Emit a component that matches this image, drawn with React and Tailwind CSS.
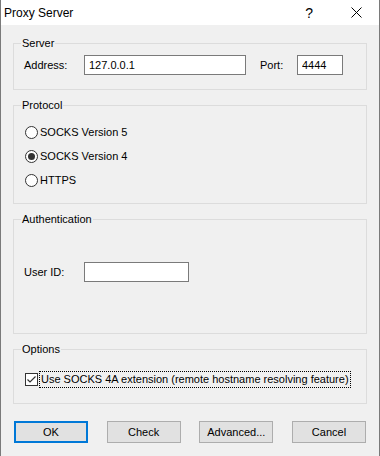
import React, { useState } from 'react';

const font = { fontFamily: '"Liberation Sans", Arial, sans-serif' };

const GroupBox = ({ title, className, children }) => (
  <fieldset className={`mx-[12px] border border-[#dcdcdc] ${className}`}>
    <legend className="ml-[7px] px-[1px] text-[11px] leading-[16px] text-black">{title}</legend>
    {children}
  </fieldset>
);

const Radio = ({ label, checked, onClick }) => (
  <div className="flex h-[24px] items-center pl-[11px] cursor-default" onClick={onClick}>
    <span className="flex h-[13px] w-[13px] items-center justify-center rounded-full border border-[#333333] bg-white">
      {checked && <span className="h-[7px] w-[7px] rounded-full bg-[#333333]" />}
    </span>
    <span className="ml-[2px] text-[11px] leading-[16px]">{label}</span>
  </div>
);

const Button = ({ children, primary }) => (
  <button
    type="button"
    className={`h-[22px] w-[74px] bg-[#e1e1e1] text-[11px] leading-[16px] text-black ${
      primary ? 'border-2 border-[#0078d7]' : 'border border-[#adadad]'
    }`}
  >
    {children}
  </button>
);

export default function App() {
  const [proto, setProto] = useState(4);
  const [use4a, setUse4a] = useState(true);

  return (
    <div style={font} className="flex h-[456px] w-[380px] flex-col border-x border-[#7a7a7a] bg-[#f0f0f0] text-black">
      {/* Title bar */}
      <div className="flex h-[25px] items-center bg-white">
        <span className="ml-[3px] text-[12px] leading-[16px]">Proxy Server</span>
        <span className="ml-auto mr-[38px] text-[14px] leading-[16px]">?</span>
        <svg width="11" height="11" viewBox="0 0 11 11" className="mr-[17px]">
          <path d="M0.5 0.5 L10.5 10.5 M10.5 0.5 L0.5 10.5" stroke="#000" strokeWidth="1" fill="none" />
        </svg>
      </div>

      <div className="pt-[10px]">
        <GroupBox title="Server" className="pt-[4px] pb-[14px]">
          <div className="flex h-[20px] items-center">
            <span className="w-[70px] pl-[10px] text-[11px]">Address:</span>
            <input
              defaultValue="127.0.0.1"
              className="h-[20px] w-[162px] border border-[#7a7a7a] bg-white px-[4px] text-[11px] outline-none"
            />
            <span className="w-[51px] pl-[14px] text-[11px]">Port:</span>
            <input
              defaultValue="4444"
              className="h-[20px] w-[46px] border border-[#7a7a7a] bg-white px-[4px] text-[11px] outline-none"
            />
          </div>
        </GroupBox>

        <GroupBox title="Protocol" className="mt-[7px] pt-[7px] pb-[11px]">
          <Radio label="SOCKS Version 5" checked={proto === 5} onClick={() => setProto(5)} />
          <Radio label="SOCKS Version 4" checked={proto === 4} onClick={() => setProto(4)} />
          <Radio label="HTTPS" checked={proto === 0} onClick={() => setProto(0)} />
        </GroupBox>

        <GroupBox title="Authentication" className="mt-[7px] pt-[35px] pb-[51px]">
          <div className="flex h-[20px] items-center">
            <span className="w-[70px] pl-[10px] text-[11px]">User ID:</span>
            <input className="h-[20px] w-[105px] border border-[#7a7a7a] bg-white px-[4px] text-[11px] outline-none" />
          </div>
        </GroupBox>

        <GroupBox title="Options" className="mt-[7px] pt-[13px] pb-[15px]">
          <div className="flex h-[18px] items-center pl-[11px]" onClick={() => setUse4a(!use4a)}>
            <span className="flex h-[13px] w-[13px] items-center justify-center border border-[#333333] bg-white">
              {use4a && (
                <svg width="11" height="11" viewBox="0 0 11 11">
                  <path d="M1.5 5.5 L4 8 L9.5 2.5" stroke="#333" strokeWidth="1.2" fill="none" />
                </svg>
              )}
            </span>
            <span className="ml-[1px] whitespace-nowrap border border-dotted border-black px-[1px] text-[11px] leading-[15px]">
              Use SOCKS 4A extension (remote hostname resolving feature)
            </span>
          </div>
        </GroupBox>

        <div className="mt-[17px] flex justify-between px-[13px]">
          <Button primary>OK</Button>
          <Button>Check</Button>
          <Button>Advanced...</Button>
          <Button>Cancel</Button>
        </div>
      </div>
    </div>
  );
}
